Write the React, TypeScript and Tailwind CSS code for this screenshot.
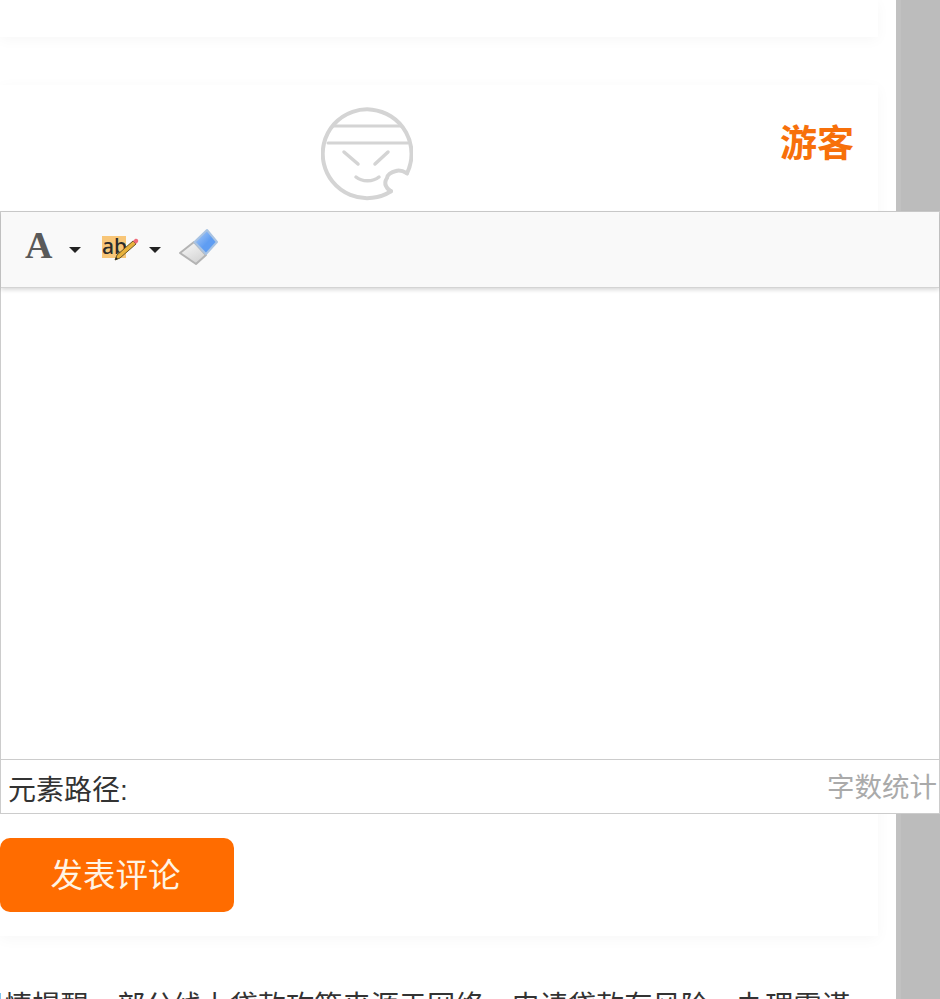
// App.tsx
const font = { fontFamily: '"Liberation Sans", "Noto Sans CJK SC", sans-serif' };

function Caret() {
  return (
    <svg width="12" height="6" viewBox="0 0 12 6" className="shrink-0">
      <path d="M0 0h12L6 6z" fill="#222" />
    </svg>
  );
}

function Avatar() {
  return (
    <svg width="92" height="96" viewBox="0 0 92 96" fill="none" stroke="#d4d4d4" strokeWidth="4" strokeLinecap="round">
      <path d="M86 67.3A44.4 44.4 0 1 0 70 85.2" />
      <path d="M86 67.3C82 65 78 64 75 65C70 66 66 69 66 72C64 75 64 78 65 80C66 83 68 84 70 85.2" />
      <path d="M13 20H80" strokeWidth="3" />
      <path d="M7 37H87" strokeWidth="3" />
      <path d="M23 46L37 58" strokeWidth="3.5" />
      <path d="M67 46L54 58" strokeWidth="3.5" />
      <path d="M35 71C41 76 52 76 58 71" strokeWidth="3.5" />
    </svg>
  );
}

function Pencil() {
  return (
    <svg width="28" height="24" viewBox="0 0 28 24" className="absolute left-[10px] top-[1px]">
      <path d="M3 23L5 18L21 4L24 7L8 21Z" fill="#e8b23c" stroke="#6a5626" strokeWidth="1" />
      <path d="M21 4L23 2C25 1 27 3 26 5L24 7Z" fill="#ef6a7a" />
      <path d="M3 23L4 20L6 22Z" fill="#222" />
    </svg>
  );
}

function Eraser() {
  return (
    <svg width="40" height="38" viewBox="0 0 40 38" className="shrink-0">
      <defs>
        <linearGradient id="eraserBlue" x1="0" y1="0" x2="1" y2="1">
          <stop offset="0" stopColor="#b4d0f6" />
          <stop offset="0.55" stopColor="#5f9df2" />
          <stop offset="1" stopColor="#5f9df2" />
        </linearGradient>
        <linearGradient id="eraserBody" x1="0" y1="0" x2="0.6" y2="1">
          <stop offset="0" stopColor="#fbfbfb" />
          <stop offset="1" stopColor="#d4d4d4" />
        </linearGradient>
      </defs>
      <path d="M15 14L27 27L17 36L1 25Z" fill="url(#eraserBody)" stroke="#b4b4b4" strokeWidth="2" strokeLinejoin="round" />
      <path d="M28 2L38 14L27 26L15.5 14Z" fill="url(#eraserBlue)" stroke="#a9c3e2" strokeWidth="2" strokeLinejoin="round" />
    </svg>
  );
}

export default function App() {
  return (
    <div className="flex h-[999px] w-[940px] overflow-hidden bg-white" style={font}>
      <main className="w-[896px] shrink-0">
        <div className="mr-[18px] h-[37px] bg-white shadow-[0_3px_14px_rgba(0,0,0,0.035)]" />

        <section className="relative z-10 mt-[48px] mr-[18px] h-[851px] bg-white shadow-[0_3px_14px_rgba(0,0,0,0.035)]">
          <div className="flex h-[126px] items-start pt-[21px] pl-[321px] pr-[24px]">
            <Avatar />
            <span className="ml-auto mt-[16px] text-[37px] leading-[46px] font-bold text-[#f7700a]">游客</span>
          </div>

          <div className="w-[940px] border border-[#cccccc] bg-white">
            <div className="flex h-[76px] items-center border-b border-[#d4d4d4] bg-[#f9f9f9] pl-[24px] shadow-[0_2px_4px_rgba(0,0,0,0.15)]">
              <span className="mb-[9px] w-[29px] text-[38px] leading-none font-bold text-[#5a5a5a]" style={{ fontFamily: '"Liberation Serif", serif' }}>
                A
              </span>
              <span className="ml-[15px]"><Caret /></span>
              <span className="relative mb-[6px] ml-[21px] h-[22px] w-[24px] bg-[#f8c678] text-center text-[21px] leading-[21px] font-medium text-[#2b2b2b]" style={{ fontFamily: '"Noto Sans", sans-serif' }}>
                ab
                <Pencil />
              </span>
              <span className="ml-[23px]"><Caret /></span>
              <span className="mb-[6px] ml-[18px]"><Eraser /></span>
            </div>
            <div className="h-[471px]" />
            <div className="flex h-[54px] items-start justify-between border-t border-[#cccccc] pl-[7px] pr-[2px]">
              <span className="mt-[12px] text-[28px] leading-[38px] text-[#333333]">元素路径:</span>
              <span className="mt-[9px] text-[27.5px] leading-[38px] text-[#aaaaaa]">字数统计</span>
            </div>
          </div>

          <button className="mt-[24px] h-[74px] w-[234px] rounded-[10px] bg-[#ff6c00] pt-[3px] pr-[3px] text-[32.5px] text-[#fff4e4]">
            发表评论
          </button>
        </section>

        <p className="mt-[50px] -ml-[24px] whitespace-nowrap text-[28.2px] leading-[40px] text-[#333333]">
          温情提醒，部分线上贷款攻等来源于网络，申请贷款有风险，办理需谨
        </p>
      </main>
      <aside className="w-[44px] shrink-0 border-l-[5px] border-[#c1c1c1] bg-[#bcbcbc]" />
    </div>
  );
}
